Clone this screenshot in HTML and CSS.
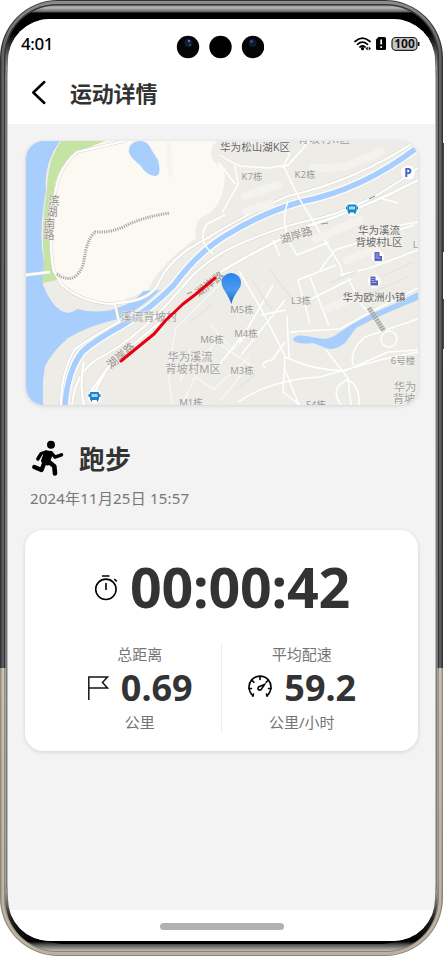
FILE: index.html
```html
<!DOCTYPE html>
<html lang="zh-CN">
<head>
<meta charset="utf-8">
<title>运动详情</title>
<link rel="stylesheet" href="styles.css">
</head>
<body>
<div class="phone">
  <svg class="frame" width="448" height="956" viewBox="0 0 448 956" fill="none">
    <defs>
      <linearGradient id="body" gradientUnits="userSpaceOnUse" x1="0" y1="0" x2="0" y2="956">
        <stop offset="0" stop-color="#8c908c"/><stop offset=".05" stop-color="#626664"/><stop offset=".699" stop-color="#5b605e"/>
        <stop offset=".699" stop-color="#cbc2b4"/><stop offset="1" stop-color="#bcb2a3"/>
      </linearGradient>
      <linearGradient id="line" gradientUnits="userSpaceOnUse" x1="0" y1="0" x2="0" y2="956">
        <stop offset="0" stop-color="#343634"/><stop offset=".699" stop-color="#303332"/>
        <stop offset=".699" stop-color="#968e82"/><stop offset="1" stop-color="#8b8376"/>
      </linearGradient>
      <linearGradient id="rim" gradientUnits="userSpaceOnUse" x1="0" y1="5" x2="0" y2="951">
        <stop offset="0" stop-color="#8a8a8a"/><stop offset=".003" stop-color="#b8b6b6"/><stop offset=".007" stop-color="#666"/><stop offset=".0085" stop-color="#000"/>
        <stop offset=".03" stop-color="#000"/><stop offset=".075" stop-color="#b8baba"/><stop offset=".93" stop-color="#b8bab6"/>
        <stop offset=".965" stop-color="#222"/><stop offset=".99" stop-color="#000"/><stop offset=".993" stop-color="#4c4e4e"/><stop offset="1" stop-color="#c0c0ba"/>
      </linearGradient>
    </defs>
    <path d="M442 143h2v109h-2zM442 299h2v50h-2z" fill="#4a4d4c"/>
    <rect x="0" y="0" width="443" height="956" rx="58" fill="url(#line)"/>
    <rect x="1.5" y="1" width="440" height="954" rx="56" fill="url(#body)"/>
    <rect x="4" y="4" width="435" height="948" rx="53" fill="url(#line)"/>
    <rect x="5.5" y="5.500" width="432" height="945.500" rx="51" fill="url(#rim)"/>
    <path d="M6.500 70v820M436.500 70v820" stroke="#787b7a"/>
    <path d="M24 34Q35 14 62 13H382Q407 14 420 34Q402 19 382 19H62Q40 19 24 34M25 924Q38 942 62 944H382Q404 943 420 924" fill="#000"/>
  </svg>
  <main class="screen">
    <div class="status">
      <span class="clock">4:01</span>
      <svg class="cams" width="88" height="24" viewBox="176 35 88 24">
        <circle cx="188" cy="47" r="11.200" fill="#050507"/><circle cx="220.500" cy="47" r="11.200" fill="#000"/><circle cx="253" cy="47" r="11.200" fill="#050507"/>
        <circle cx="188.500" cy="43" r="4" fill="#101d30"/><circle cx="189" cy="41" r="1.200" fill="#5480b0"/><circle cx="190" cy="45" r="1" fill="#315783"/>
        <circle cx="252.500" cy="43" r="4" fill="#101a32"/><circle cx="251.500" cy="41.500" r="1.200" fill="#44608e"/>
      </svg>
      <svg class="signals" width="66" height="16" viewBox="354 36 66 16">
        <g fill="none" stroke="#000" stroke-width="1.700" stroke-linecap="round">
          <path d="M355 41.500q7.500-6.800 15 0M357.500 44.300q5-4.400 10 0M360 47q2.500-2 5 0"/>
        </g>
        <circle cx="362.500" cy="48.700" r="1.600"/><path d="M365.500 48.600l2.200-2v4zM370.900 48.600l-2.200-2v4z"/>
        <path d="M378.500 37h6q1.500 0 1.500 1.500v10q0 1.500-1.500 1.500h-7q-1.500 0-1.500-1.500v-9z"/>
        <path d="M381.200 39.500v5M381.200 46.200v1.800" stroke="#fff" stroke-width="1.700"/>
        <rect x="392" y="37.500" width="25" height="12.800" rx="3.800" fill="#c6c6c6" stroke="#222" stroke-width="1.200"/>
        <path d="M418.700 42v4" stroke="#111" stroke-width="1.600"/>
        <text x="404.500" y="48.300" class="battery">100</text>
      </svg>
    </div>
    <header class="bar">
      <svg width="16" height="26" viewBox="31 79 16 26" fill="none" stroke="#000" stroke-width="2.500" stroke-linecap="round" stroke-linejoin="round"><path d="M44.300 82L33.300 92.500L44.300 103"/></svg>
      <h1>运动详情</h1>
    </header>
    <div class="content">
      <svg class="map" width="392" height="264" viewBox="26 141 392 264">
        <path d="M26 141h392v264H26z" fill="#edece7"/>
        <path d="M53 141H217Q205 153 217 165L224 186Q220 207 207 214Q193 220 196 238L186 246Q159 266 148 290L119 302Q93 309 61 285L50 260Z" fill="#fcf9f2"/>
        <path d="M218 161q10 10 5 26q-3 14-10 19z" fill="#fcf9f2"/>
        <path d="M26 141H60Q43 165 46 190Q38 235 44 261L43 285Q50 303 60 310Q68 316 77 309Q101 315 120 307Q135 302 143 291L160 290Q148 303 122 318Q90 325 68 338Q53 351 45 366L43 380V405H26Z" fill="#a8cefd"/>
        <path d="M61 141H105L80 151Q58 163 54 190L50 230L53 262L57 280L42 283L44 260Q41 225 47 190Q48 158 61 141" fill="#c5e3a3"/>
        <path d="M129 149Q131 141 140 141Q148 141 151 149L158 160Q162 176 155 176Q147 176 140 165Q127 155 129 149" fill="#a8cefd"/>
        <path d="M168 142l3 35" stroke="#f6f4ef" stroke-width="5"/>
        <g fill="none">
          <path d="M65 407Q67 372 82 352Q94 341 121 326Q151 309 174 285Q197 253 225 236Q262 213 300 202Q362 190 418 147" stroke="#fff" stroke-width="8"/>
          <path d="M65 407Q67 372 82 352Q94 341 121 326Q151 309 174 285Q197 253 225 236Q262 213 300 202Q362 190 418 147" stroke="#a8cefd" stroke-width="5.500"/>
          <path d="M72 407Q74 375 96 360Q139 338 179 291Q202 262 231 248Q271 229 311 220Q365 209 420 166M61 405Q61 372 75 349Q92 337 119 322L115 304Q84 304 62 285L54 271Q48 247 54 204Q56 169 77 152L125 141M115 303Q152 302 160 280Q172 256 206 239Q242 216 288 196Q357 181 422 137" stroke="#d9d7d0" stroke-width="3.200"/>
          <path d="M72 407Q74 375 96 360Q139 338 179 291Q202 262 231 248Q271 229 311 220Q365 209 420 166M61 405Q61 372 75 349Q92 337 119 322L115 304Q84 304 62 285L54 271Q48 247 54 204Q56 169 77 152L125 141M115 303Q152 302 160 280Q172 256 206 239Q242 216 288 196Q357 181 422 137" stroke="#fff" stroke-width="2.200"/>
          <path d="M26 275L50 272M84 362q-5 23 0 43M91 391L112 362L175 310L222 271Q266 245 308 226Q365 208 418 180M94 394L106 370" stroke="#dbd9d3" stroke-width="3.400"/>
          <path d="M26 275L50 272M84 362q-5 23 0 43M91 391L112 362L175 310L222 271Q266 245 308 226Q365 208 418 180M94 394L106 370" stroke="#fff" stroke-width="2.500"/>
          <g stroke="#fff" stroke-width="1.500">
            <path d="M284 167L300 200L340 265L343 276M239 271L264 314L285 356L283 392L300 405M220 155Q230 162 240 166L268 168L288 165L300 152L309 141M282 168L290 154L280 146M235 165L238 184L222 213M220 164L235 184M273 240L280 256M288 201Q278 227 297 255L329 242M207 224Q196 240 213 254M207 224L225 215M379 198L398 203M361 222L368 238M385 228L418 222M320 270L335 250L414 225M340 275L370 268L418 250M298 280L336 265M298 280L310 323M310 277L329 326M309 300L351 279M290 332L340 329Q354 321 371 312L418 288M287 316L289 358M285 357Q312 370 345 371L388 352L418 350M238 402Q270 380 320 377L380 360L418 352M326 350L348 378L351 405M353 365Q349 350 365 337L418 319M341 405Q329 388 347 380Q360 384 359 405M348 278L361 304L368 312M273 285L239 343M261 315L286 310M241 355L285 300M215 370L249 327M265 368q-6-6 7-8l13-18M299 405l-15-38"/>
            <path d="M176 328L168 370L172 405M176 328L225 279M192 370L216 342L251 365M213 390L250 356M220 401L245 370M182 405L195 377L215 390M180 382L190 350M210 324L233 350L247 335" opacity=".55"/>
            <circle cx="389" cy="339" r="8" fill="#edece7"/>
          </g>
          <g stroke="#f3f2ee" stroke-width="8" stroke-linecap="round">
            <path d="M245 196L278 185M313 168L344 167L381 152M246 211L270 204M327 309L350 299M347 260L376 249M316 239L360 220"/>
          </g>
          <g stroke="#e5e4df" stroke-width="1.500"><path d="M190 322l22-18M185 350l20 20M235 390l20-15M252 280l20 30M270 270l25 33M371 293l37-16M385 275l28-13M330 283l27-12"/></g>
        </g>
        <path d="M293 340Q294 334 306 336L323 339Q332 339 340 332Q363 316 392 305L418 292V300Q378 316 356 328L345 343Q332 353 321 346L313 343Q298 345 293 340" fill="#a8cefd"/>
        <g fill="none" stroke-linejoin="round">
          <path d="M57 274Q68 282 76 276Q83 269 84 260Q87 239 95 232Q112 233 127 225Q147 216 170 213" stroke="#aaa69f" stroke-width="3" stroke-dasharray="1.200 1.100"/>
          <path d="M369 308L384 331" stroke="#aaa99f" stroke-width="5" stroke-dasharray="2 .7"/>
        </g>
        <g class="labels" text-anchor="middle">
          <g class="place">
            <text x="255" y="151" textLength="70">华为松山湖K区</text><text x="324" y="143" textLength="52" class="faint">背坡村K区</text>
            <text x="379" y="234" textLength="42">华为溪流</text><text x="379" y="245.500" textLength="47">背坡村L区</text><text x="374" y="301" textLength="63">华为欧洲小镇</text>
          </g>
          <text x="252" y="179.500">K7栋</text><text x="305" y="178">K2栋</text><text x="301" y="304">L3栋</text><text x="242" y="312.500">M5栋</text><text x="246" y="336.500">M4栋</text>
          <text x="212" y="342.500">M6栋</text><text x="242" y="373.500">M3栋</text><text x="191" y="405.500">M1栋</text><text x="316" y="407.500">F4栋</text><text x="403" y="363.500">6号楼</text><text x="418" y="248">L2</text>
          <g class="area"><text x="149" y="321">溪流背坡村</text><text x="190" y="360.500">华为溪流</text><text x="193" y="373">背坡村M区</text><text x="405" y="390.500">华为</text><text x="404" y="403">背坡</text></g>
          <g class="road"><text x="54" y="204.500">滨</text><text x="52" y="216">湖</text><text x="49.500" y="227.500">南</text><text x="49" y="239">路</text><text transform="rotate(-17 297 238)" x="297" y="239">湖岸路</text><text transform="rotate(-40 122 357)" x="122" y="359">湖岸路</text><text transform="rotate(-37 212 282)" x="209" y="286">湖岸路</text></g>
        </g>
        <path d="M187 294l5-2M321 224l7-1M369 199l6-3" stroke="#9b9891" stroke-width="1.200"/>
        <path d="M121 361L138 347L154 334L166 320L183 304L196 294L215 278" fill="none" stroke="#e50012" stroke-width="3" stroke-linecap="round" stroke-linejoin="round"/>
        <circle cx="408" cy="172.500" r="7" fill="#fff"/><text x="408" y="176.500" class="parking">P</text>
        <g><circle cx="352" cy="209" r="7" fill="#fff"/><rect x="347.500" y="204.500" width="9" height="8" rx="1" fill="#1686cc"/><path d="M349 206.500h6v3h-6z" fill="#a9d6f5"/><path d="M346.700 206.500v3M357.300 206.500v3M349 212v2M355 212v2" stroke="#0875bd" stroke-width="1.300"/></g>
        <g transform="translate(-257.500 187.500)"><circle cx="352" cy="209" r="7" fill="#fff"/><rect x="347.500" y="204.500" width="9" height="8" rx="1" fill="#1686cc"/><path d="M349 206.500h6v3h-6z" fill="#a9d6f5"/><path d="M346.700 206.500v3M357.300 206.500v3M349 212v2M355 212v2" stroke="#0875bd" stroke-width="1.300"/></g>
        <g><circle cx="378" cy="257" r="6.500" fill="#fff"/><path d="M374.500 252h5v4h2.500v5h-7.500z" fill="#535eb7"/><path d="M375.500 254h3M375.500 256h3M375.500 258h5M374 261.300h9" stroke="#d0d3f2" stroke-width=".7"/></g>
        <g transform="translate(-4 24.500)"><circle cx="378" cy="257" r="6.500" fill="#fff"/><path d="M374.500 252h5v4h2.500v5h-7.500z" fill="#535eb7"/><path d="M375.500 254h3M375.500 256h3M375.500 258h5M374 261.300h9" stroke="#d0d3f2" stroke-width=".7"/></g>
        <defs><linearGradient id="pin" x2="0" y2="1"><stop stop-color="#2b84ec"/><stop offset=".55" stop-color="#4b9af2"/><stop offset="1" stop-color="#1766c4"/></linearGradient></defs>
        <path d="M231.300 304Q229.500 298 223.500 289Q219 280 224 276Q231 270 238.500 276Q243.500 282 239 289Q233 297 231.300 304" fill="url(#pin)"/>
      </svg>
      <div class="activity">
        <svg width="34" height="38" viewBox="30 440 34 38" fill="none" stroke="#000" stroke-linecap="round" stroke-linejoin="round">
          <circle cx="51" cy="445.700" r="4" fill="#000" stroke="none"/>
          <path d="M46 453.500L51 454L47.500 464.500L43 462Z" fill="#000" stroke-width="4"/>
          <path d="M46 453L41.200 454.500L37.800 460" stroke-width="3.400"/><path d="M51.500 454L55 458.200L61.500 455.800" stroke-width="3.400"/>
          <path d="M49 463L54.300 467.200L55 474.500" stroke-width="4.600"/><path d="M44.500 463.500L41.500 471L34.300 468" stroke-width="4.400"/>
        </svg>
        <h2>跑步</h2>
      </div>
      <p class="date">2024年11月25日 15:57</p>
      <section class="card">
        <div class="duration">
          <svg width="24" height="28" viewBox="95 573 24 28" fill="none" stroke="#000" stroke-width="1.600"><circle cx="106.900" cy="589.300" r="10.200"/><path d="M103 576h7.500M107 583v7M115.200 579l2.600 2.300"/></svg>
          <strong>00:00:42</strong>
        </div>
        <div class="stats">
          <div class="stat"><span>总距离</span>
            <div class="value"><svg width="22" height="26" viewBox="88 677 22 26" fill="none" stroke="#151515" stroke-width="1.500"><path d="M89.800 702V679H108.500L103.500 684.500L108.500 690H90"/></svg><b>0.69</b></div>
            <span>公里</span></div>
          <div class="stat"><span>平均配速</span>
            <div class="value"><svg width="26" height="26" viewBox="248 677 26 26" fill="none" stroke="#000" stroke-width="1.600" stroke-linecap="round"><path d="M254.300 697.300A11 11 0 1 1 267.700 697.300" transform="translate(0 .5)"/><path d="M261 679v2.500M253 682.500l1.800 1.700M269 682.500l-1.800 1.700M250 690.500h2.500M272 690.500h-2.500M253.500 698l1-2M268.500 698l-1-2M265.500 686.500L260 688.700Q257.800 690.600 260 692Q262.300 692.500 263 690.300Z"/></svg><b>59.2</b></div>
            <span>公里/小时</span></div>
        </div>
      </section>
    </div>
    <footer><i></i></footer>
  </main>
</div>
</body>
</html>
```
FILE: styles.css
```css
* { box-sizing: border-box; }
body { margin: 0; background: #fff; font-family: "Noto Sans", "Noto Sans CJK SC", sans-serif; color: #333; overflow: hidden; }
.phone { position: relative; width: 448px; height: 956px; padding: 19px 13px 15px 8px; }
.frame { position: absolute; inset: 0; }
.screen { position: relative; height: 922px; background: #f3f3f3; border-radius: 42px; overflow: hidden; display: flex; flex-direction: column; }
.status { height: 43px; background: #fff; display: flex; padding: 16px 15px 0 13px; }
.clock { font: 500 17px/17px "Noto Sans", sans-serif; color: #000; width: 155px; letter-spacing: -.4px; }
.signals { margin-left: auto; margin-top: 1px; }
.battery { font: 700 12px "Noto Sans", sans-serif; text-anchor: middle; fill: #111; }
.bar { height: 62px; background: #fff; display: flex; align-items: center; gap: 23px; padding: 0 23px 3px; }
h1, h2, p { margin: 0; }
h1 { font: 700 22px/30px "Noto Sans CJK SC", sans-serif; letter-spacing: -.2px; }
.content { flex: 1; padding: 17px 17px 0; }
.map { display: block; margin-left: 1px; border-radius: 18px; box-shadow: 0 1px 4px #0002; }
.labels { font: 9.5px "Noto Sans", "Noto Sans CJK SC", sans-serif; fill: #999; stroke: #f2f1ed; stroke-width: 1px; paint-order: stroke; }
.place { font-size: 10.5px; fill: #666; }
.faint { fill: #999; }
.area { font-size: 11.3px; fill: #a0a0a0; }
.road { font-size: 11px; fill: #999188; }
.parking { font: 700 12px "Noto Sans", sans-serif; text-anchor: middle; fill: #3d62c8; }
.activity { display: flex; align-items: center; gap: 15px; margin: 34px 0 0 5px; height: 38px; }
h2 { font: 700 26px/38px "Noto Sans CJK SC", sans-serif; }
.date { font-size: 15px; line-height: 22px; margin: 10px 0 0 5px; color: #777; letter-spacing: .2px; }
.card { margin-top: 21px; height: 221px; background: #fff; border-radius: 18px; box-shadow: 0 1px 4px #0002; }
.duration { display: flex; align-items: center; justify-content: center; height: 113px; gap: 12px; padding-left: 1px; }
.duration strong { font-size: 55.5px; line-height: 76px; letter-spacing: -.2px; }
.stats { display: grid; grid-template-columns: 1fr 1fr; height: 90px; padding: 0 36px 0 34px; }
.stat { display: flex; flex-direction: column; align-items: center; font-size: 15px; color: #757575; }
.stat + .stat { border-left: 1px solid #ececec; }
.stat > span { line-height: 22px; }
.value { display: flex; align-items: center; gap: 12px; height: 46px; color: #333; }
.value b { font-size: 36px; line-height: 46px; }
.stat + .stat .value { gap: 11px; }
footer { height: 31px; background: #fff; display: flex; justify-content: center; padding-top: 13px; }
footer i { width: 124px; height: 7px; border-radius: 4px; background: #b1b1b1; }
```
